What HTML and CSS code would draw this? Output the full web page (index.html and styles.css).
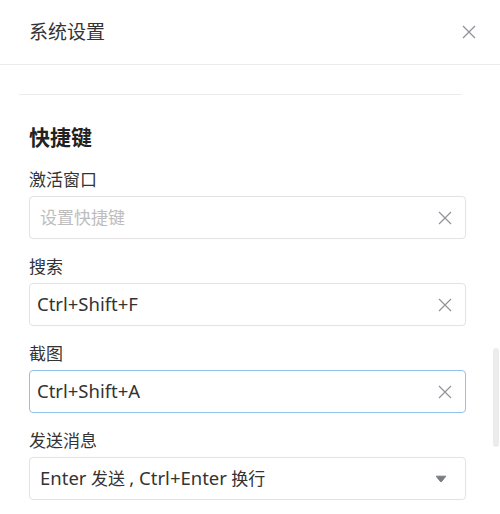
FILE: index.html
```html
<!DOCTYPE html>
<html lang="zh-CN">
<head>
<meta charset="utf-8">
<title>系统设置</title>
<link rel="stylesheet" href="styles.css">
</head>
<body>
<div class="dialog">
  <header class="header">
    <h1 class="title">系统设置</h1>
    <button class="close" aria-label="关闭">
      <svg width="14" height="14" viewBox="0 0 14 14"><path d="M1 1L13 13M13 1L1 13" stroke="#8f9399" stroke-width="1.3" fill="none"/></svg>
    </button>
  </header>
  <main class="body">
    <hr class="divider">
    <section class="section">
      <h2 class="heading">快捷键</h2>
      <div class="field">
        <label class="label">激活窗口</label>
        <div class="input">
          <span class="value placeholder">设置快捷键</span>
          <svg class="clear" width="14" height="14" viewBox="0 0 14 14"><path d="M1 1L13 13M13 1L1 13" stroke="#8f9399" stroke-width="1.2" fill="none"/></svg>
        </div>
      </div>
      <div class="field">
        <label class="label">搜索</label>
        <div class="input">
          <span class="value"><span class="latin">Ctrl+Shift+F</span></span>
          <svg class="clear" width="14" height="14" viewBox="0 0 14 14"><path d="M1 1L13 13M13 1L1 13" stroke="#8f9399" stroke-width="1.2" fill="none"/></svg>
        </div>
      </div>
      <div class="field">
        <label class="label">截图</label>
        <div class="input focused">
          <span class="value"><span class="latin">Ctrl+Shift+A</span></span>
          <svg class="clear" width="14" height="14" viewBox="0 0 14 14"><path d="M1 1L13 13M13 1L1 13" stroke="#8f9399" stroke-width="1.2" fill="none"/></svg>
        </div>
      </div>
      <div class="field">
        <label class="label">发送消息</label>
        <div class="input select">
          <span class="value"><span class="latin">Enter</span> 发送 <span class="latin">, Ctrl+Enter</span> 换行</span>
          <svg class="caret" width="12" height="8" viewBox="0 0 12 8"><path d="M1.2 1.2H10.8L6.7 6.4Q6 7.3 5.3 6.4Z" fill="#7a7d82" stroke="#7a7d82" stroke-width="1" stroke-linejoin="round"/></svg>
        </div>
      </div>
      <div class="field">
        <label class="label">消息通知设置</label>
      </div>
    </section>
  </main>
  <div class="scrollbar"></div>
</div>
</body>
</html>
```

FILE: styles.css
```css
html, body {
  margin: 0;
  padding: 0;
  background: #fff;
  overflow: hidden;
}

body {
  font-family: "Noto Sans", "Noto Sans CJK SC", sans-serif;
  color: #333;
}

.dialog {
  position: relative;
  width: 500px;
  height: 514px;
  overflow: hidden;
}

.header {
  height: 65px;
  border-bottom: 1px solid #ececec;
  display: flex;
  align-items: center;
  justify-content: space-between;
  padding: 0 24px 0 29px;
  box-sizing: border-box;
}

.title {
  margin: 0;
  font-size: 19px;
  font-weight: 400;
  color: #333;
  line-height: 26px;
}

.close {
  border: 0;
  background: none;
  padding: 0;
  width: 14px;
  height: 14px;
  display: flex;
}

.body {
  padding: 29px 34px 0 19px;
}

.divider {
  margin: 0 4px 0 0;
  border: 0;
  border-top: 1px solid #ececec;
  height: 0;
}

.section {
  padding: 28px 0 0 10px;
}

.heading {
  margin: 0 0 18px;
  font-size: 21px;
  font-weight: 700;
  line-height: 28px;
  color: #222;
}

.field {
  display: flex;
  flex-direction: column;
  gap: 5px;
  margin-bottom: 17px;
}

.label {
  font-size: 17px;
  line-height: 22px;
  color: #333;
}

.input {
  height: 43px;
  box-sizing: border-box;
  border: 1px solid #e3e3e3;
  border-radius: 4px;
  display: flex;
  align-items: center;
  justify-content: space-between;
  padding: 0 13px 0 7px;
  box-shadow: 0 0 1px rgba(0,0,0,0.04);
}

.input.focused {
  border-color: #92c3f0;
}

.input.select {
  padding: 0 18px 0 10px;
}

.value {
  font-size: 17px;
  line-height: 22px;
  color: #333;
}

.latin {
  font-size: 18.5px;
}

.placeholder {
  color: #bdbdbd;
  padding-left: 3px;
}

.clear {
  flex: none;
}

.caret {
  flex: none;
}

.scrollbar {
  position: absolute;
  left: 493px;
  top: 348px;
  width: 6px;
  height: 99px;
  border-radius: 3px;
  background: #ececec;
}
```
